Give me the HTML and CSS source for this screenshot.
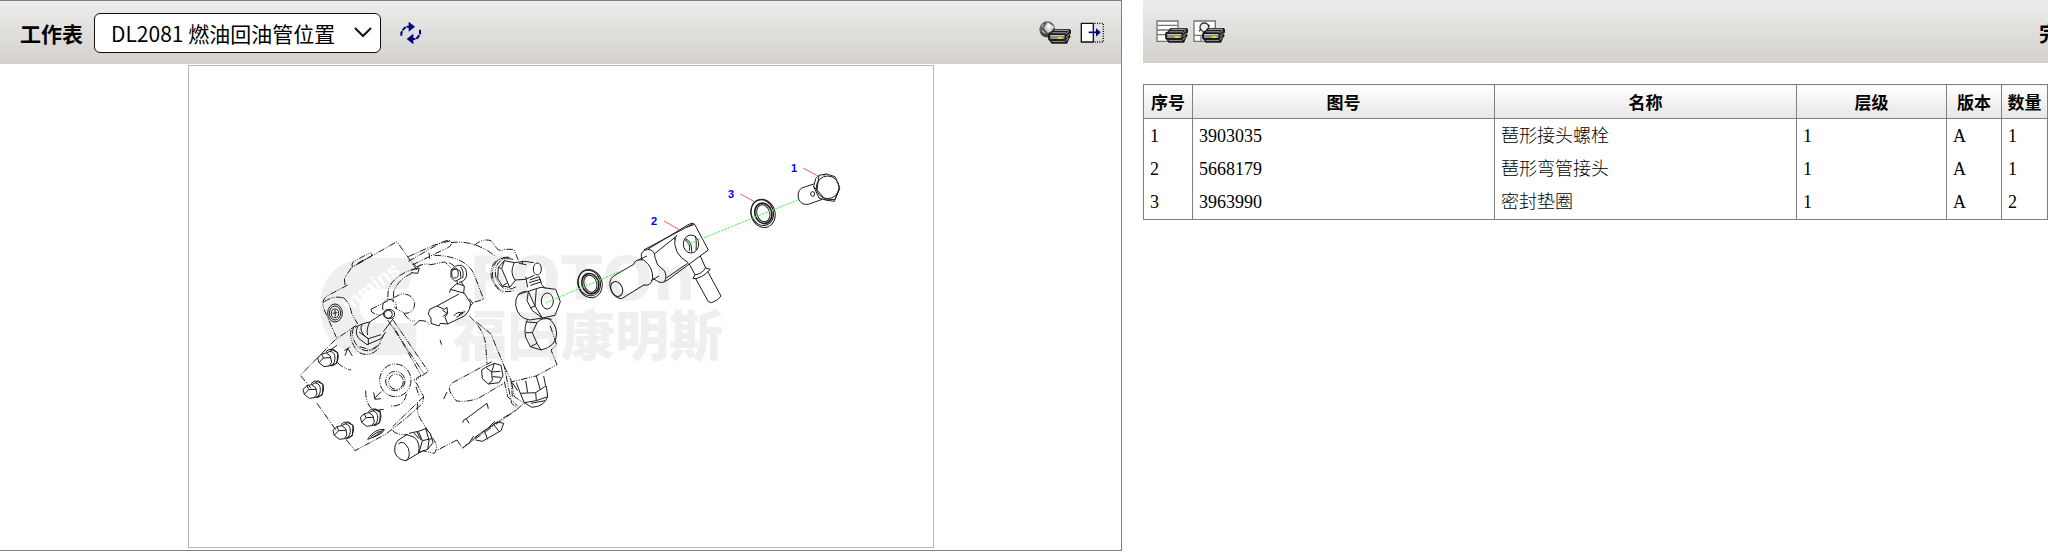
FILE: index.html
```html
<!DOCTYPE html>
<html lang="zh-CN">
<head>
<meta charset="utf-8">
<title>工作表</title>
<link rel="stylesheet" href="styles.css">
</head>
<body>
<svg class="defs" aria-hidden="true">
  <defs>
    <symbol id="printer" viewBox="0 0 70 48">
      <path d="M4 15H8L18 3H66L70 8V14L66 20L68 26L63 34L58 46H12L8 40L2 34V22Z" fill="#1c1c1c"/>
      <path d="M20 7H62M14 14H54" stroke="#9a9a9a" stroke-width="3"/>
      <path d="M8 22H50V32H8Z" fill="#8f8f8f"/>
      <path d="M8 22H50" stroke="#c2c2c2" stroke-width="3"/>
      <path d="M13 40H52" stroke="#8a8a8a" stroke-width="3"/>
      <path d="M54 18L63 10M54 28L65 18M54 38L62 28" stroke="#8a8a8a" stroke-width="3"/>
      <path d="M30 30H44" stroke="#eee600" stroke-width="5"/>
    </symbol>
  </defs>
</svg>
<main class="viewer">
  <section class="sheet">
    <header class="toolbar">
      <label class="toolbar-label" for="sheet-select">工作表</label>
      <span class="select-box">
        <select id="sheet-select" class="sheet-select"><option>DL2081 燃油回油管位置</option></select>
        <svg class="chevron" viewBox="0 0 18 12" aria-hidden="true"><path d="M1 1L9 9L17 1" fill="none" stroke="#111" stroke-width="2"/></svg>
      </span>
      <button class="icon-button refresh" aria-label="刷新">
        <svg width="22" height="24" viewBox="0 0 66 72"><g fill="none" stroke="#00007f" stroke-width="6"><path d="M4 44V35L10 25L18 17H27" stroke-dasharray="14 3"/><path d="M60 26V39L54 48L48 54H38" stroke-dasharray="14 3"/></g><path d="M26 2L45 17L26 32ZM40 38L20 54L40 70Z" fill="#00007f"/></svg>
      </button>
      <div class="toolbar-actions">
        <button class="icon-button" aria-label="打印图形">
          <svg width="32" height="24" viewBox="0 0 96 72"><circle cx="25" cy="25" r="24" fill="#626262"/><path d="M2 32A24 24 0 0 0 48 32Q25 46 2 32Z" fill="#2c2c2c" opacity=".6"/><path d="M26 3L46 17L39 29L27 35L15 21Z" fill="#d4d4d4"/><path d="M29 7L37 16L31 24L23 16Z" fill="#fff"/><path d="M8 18L13 10M9 29L18 37" stroke="#aaa" stroke-width="4"/><use href="#printer" x="25" y="21" width="72" height="49"/></svg>
        </button>
        <button class="icon-button" aria-label="隐藏列表">
          <svg width="24" height="22" viewBox="0 0 72 66"><path d="M4 4H40V60H4Z" fill="#fff" stroke="#111" stroke-width="4"/><path d="M44 4H70V60H44" fill="none" stroke="#111" stroke-width="4" stroke-dasharray="3 4"/><path d="M26 31H52" stroke="#00007f" stroke-width="5"/><path d="M48 19L62 31L48 44Z" fill="#00007f"/></svg>
        </button>
      </div>
    </header>
    <div class="canvas-wrap">
      <svg class="drawing" viewBox="188 66 744 481" role="img" aria-label="燃油回油管位置">
        <g class="watermark">
          <g transform="translate(290 230) scale(.33333)">
            <path d="M382 84H232Q90 94 88 230Q90 365 232 376H376V280H255Q206 275 206 230Q206 178 255 176H350Z"/>
            <text class="wm-mark" transform="translate(172 248) rotate(-37)">mmins</text>
            <circle cx="392" cy="366" r="7" fill="none" stroke="#eee" stroke-width="2"/>
          </g>
          <text class="wm-latin" x="468" y="300">FOTOn</text>
          <text class="wm-cjk" x="452" y="356">福田康明斯</text>
        </g>
        <g class="pump" transform="translate(290 230) scale(.33333)">
          <g class="dash">
            <path d="M162 165L160 145L182 112L318 35L378 120M184 112Q178 96 200 88L238 68Q248 74 236 82L190 108M200 100L235 80"/>
            <path d="M170 165L110 197Q88 210 100 240L136 322M156 202Q175 215 182 250L200 282M100 215Q130 195 156 204"/>
            <path d="M196 286L134 328L28 436L60 475M78 520L136 602M165 628L192 662L285 612L345 565L395 520L398 500L378 462L368 450L390 436L308 290"/>
            <path d="M290 270L398 430M306 270L412 424L375 450M375 470L385 498M380 520Q375 545 390 570L425 625Q445 650 430 670L395 662"/>
            <path d="M352 94L450 38Q480 24 482 40Q480 52 455 60L362 106M352 80L430 45L480 32M414 68L416 86"/>
            <path d="M480 38Q550 28 615 80M550 46Q575 24 600 32L618 56Q630 66 640 58L668 58L682 90M430 76Q520 78 548 130L578 208L545 218"/>
            <path d="M378 115Q310 132 292 178L290 208M362 130Q320 150 308 185L306 220M378 112Q395 98 420 104L460 96Q475 104 482 120"/>
            <path d="M240 238L330 192Q365 190 371 220Q370 250 340 250L310 232M240 238Q238 252 270 256M276 240Q270 215 292 208Q318 208 316 235M340 252Q360 280 372 272M385 272Q410 270 415 285"/>
            <path d="M535 258Q580 300 584 345L588 400M556 276L600 312L640 410L662 520L676 532"/>
            <path d="M640 410L660 450L664 500M640 455L650 500L680 528M602 395L485 458Q468 470 480 490L495 512Q520 518 560 506L635 462"/>
            <path d="M498 630L514 654L676 540L698 520M498 630L440 660M515 655Q575 600 676 540M305 600Q310 615 350 614M346 492Q340 530 300 528M398 500L305 590"/>
            <path d="M778 288L797 345L780 360L798 404L735 438L660 456M662 458L670 500L700 520"/>
            <ellipse cx="313" cy="451" rx="47" ry="49"/><ellipse cx="313" cy="453" rx="29" ry="29"/><ellipse cx="315" cy="455" rx="22" ry="23"/>
            <path d="M140 398Q155 415 180 420M224 482Q224 520 242 536L270 544M138 345Q130 355 112 360"/>
          </g>
          <g class="solid">
            <ellipse cx="132" cy="249" rx="22" ry="27"/><ellipse cx="132" cy="249" rx="17" ry="21"/><ellipse cx="132" cy="250" rx="11" ry="13"/><path d="M125 250L139 248M132 240L133 259"/>
            <path d="M162 377L170 355L184 378M160 362L176 352M248 487L252 508L270 506M250 506L270 485M370 286L386 270M447 330L452 344M458 507L468 486M262 540L278 538"/>
            <path d="M515 578Q518 566 526 566L588 520L592 536M526 566L534 580"/>
            <g id="bolt"><path d="M92 372L106 369L118 378L122 397L114 408L99 410L84 398L80 383ZM92 372L97 384L84 398M97 384L120 383M106 369L124 360L140 368L138 400L114 408"/><path d="M104 366Q110 356 126 358Q146 366 141 387Q136 407 120 408M118 364Q133 367 132 386Q132 398 124 405"/></g>
            <use href="#bolt" x="-44" y="95"/><use href="#bolt" x="46" y="218"/><use href="#bolt" x="128" y="179"/>
            <ellipse cx="294" cy="252" rx="17" ry="14"/><ellipse cx="292" cy="253" rx="12" ry="12"/>
            <path d="M276 250L236 276Q225 300 230 315M308 264L277 305M200 290Q190 310 204 326L228 344L270 326L284 306M192 292L214 282L235 276M204 306L232 326L270 314M232 326V344M214 282Q200 302 230 326"/>
            <path class="dash" d="M188 292Q176 322 204 354Q238 374 262 346L278 315M180 300Q174 335 202 366Q235 386 266 352M206 350L240 360L270 340"/>
            <path d="M416 238L438 228L460 238L468 232L470 250L462 262L470 282L448 280L444 288L420 280V264L412 252ZM438 228L504 192M470 282L520 258Q540 240 538 218L520 190L478 178L476 188M478 178L498 160L520 168L518 190M454 240L468 250L455 260M488 258Q500 242 516 250L496 262M504 255Q510 247 522 245M535 206L545 220L536 230"/>
            <ellipse cx="492" cy="131" rx="10" ry="13"/><path d="M480 122L494 114L508 124L510 145L492 154L480 142ZM482 120Q490 104 512 106Q530 115 526 140Q520 155 505 157M508 110Q520 122 515 145M475 98L490 108M360 120L385 114L380 130L360 128M367 100L378 112L388 104M498 152L500 164M510 154L518 168"/>
            <ellipse cx="739" cy="117" rx="12" ry="18"/>
            <path d="M728 98L700 94L670 98Q655 128 672 150L704 148L730 136M670 98L640 92L622 112L620 145L634 168L656 172L674 150M640 92L632 116L650 158L656 172M632 116L622 112M650 158L634 168M694 94V102M684 100L706 104"/>
            <path class="dash" d="M656 82Q620 78 608 110Q596 148 624 176Q644 192 672 180M666 88Q624 78 614 116Q608 148 634 172Q652 184 676 170M650 84Q602 82 600 130Q602 170 640 190"/>
            <path d="M704 140L710 172M716 150L745 140L752 164M714 158L748 148M718 166L750 156M752 164L764 176"/>
            <ellipse cx="769" cy="213" rx="18" ry="24"/>
            <path d="M736 176L750 172L794 178L808 215L792 256L754 264L732 228ZM736 176L712 184L708 212L724 242L754 264M732 228L718 234M712 184L732 228M708 184Q672 184 674 226Q680 264 716 270L754 264M680 194L710 184"/>
            <path d="M710 268Q698 290 704 322L718 350L750 360Q795 350 797 312Q796 280 770 264M704 276L738 278L724 308L738 340L750 360M724 308H704M738 278Q752 260 782 268M738 340L718 350"/>
            <path d="M572 420L584 412L602 426L604 452L592 462L574 446ZM584 412L610 400L630 406L636 438M592 462L624 458L636 438M602 426L628 424M604 440L630 442M610 400L602 426"/>
            <path d="M676 458L688 490L734 488L764 468L758 438M688 490L700 518L736 512L770 500L766 468M734 488L736 512M704 452L710 488M736 438L748 480M700 518L722 532Q760 530 770 500M720 520L762 512M664 458L680 482"/>
            <path d="M348 614L322 630Q308 645 312 668Q320 690 345 692L392 664M322 642Q338 628 352 655Q360 682 345 692M348 614L370 622Q390 640 382 670M354 610L382 604L404 596L418 610L426 638L410 658L382 668M382 604L394 632L384 668M394 632L422 626M404 596L414 630L410 658M368 608L384 626M378 606L390 630"/>
            <path d="M552 622L580 602L620 576L638 580L630 602L574 634L554 630M580 602L590 628M608 584L624 604M592 594Q600 584 612 574M534 640L548 618M230 628Q250 596 280 598Q278 612 230 628ZM240 620Q258 604 276 602M246 622L270 606"/>
          </g>
        </g>
        <g class="part" transform="translate(560 150) scale(.33333)">
          <path d="M241 320Q238 304 260 298L380 225Q396 216 401 223L442 300L320 390Q300 404 287 392L275 385M260 298Q282 300 282 322L290 345L310 362Q320 382 310 394M248 300L395 222M280 312L342 262M241 320L243 330M316 384L380 340M342 260Q334 312 382 338M348 255Q342 262 342 270M401 223L376 232"/>
          <ellipse cx="390" cy="282" rx="23" ry="27"/><path d="M373 266Q394 274 392 306M370 268Q390 280 385 302M402 258Q408 270 405 300"/>
          <path d="M218 343Q222 326 248 330Q276 350 275 385Q270 410 248 405M218 343L158 378Q142 390 148 414Q160 446 182 446L250 404M232 330L258 318M270 392L294 378"/><ellipse cx="167" cy="417" rx="17" ry="23" transform="rotate(-24 167 417)"/>
          <path d="M384 340L402 374L396 386Q420 388 448 358L434 354L418 318M404 386L442 455L452 458Q474 450 480 438L440 364M402 374Q420 374 434 354"/>
          <g id="washer"><ellipse cx="606" cy="190" rx="36" ry="43" transform="rotate(-18 606 190)"/><ellipse cx="604" cy="188" rx="33" ry="39" transform="rotate(-18 604 188)"/><ellipse cx="607" cy="190" rx="25" ry="31" transform="rotate(-18 607 190)" stroke-width="5"/><ellipse cx="607" cy="190" rx="19" ry="26" transform="rotate(-18 607 190)"/></g>
          <use href="#washer" x="-519" y="211"/>
          <path d="M774 76L796 72L822 80L836 112L822 148L794 150L768 120ZM774 76L764 86L758 110L774 144L794 150L820 154L836 116M758 110L768 120M758 102L722 114Q706 126 714 150Q724 166 742 163L784 148M796 72L788 76"/><circle cx="800" cy="112" r="34"/><ellipse cx="755" cy="132" rx="6" ry="7"/>
          <path class="axis" d="M712 149L375 285M182 362L-45 458"/>
          <path class="leader" d="M726 54L770 78M538 132L580 155M309 213L353 238"/>
        </g>
        <g class="callout"><text x="790" y="172">1</text><text x="727" y="198">3</text><text x="650" y="225">2</text></g>
      </svg>
    </div>
  </section>
  <section class="parts">
    <header class="toolbar parts-toolbar">
      <button class="icon-button" aria-label="打印列表">
        <svg width="32" height="24" viewBox="0 0 96 72"><path d="M3 3H66V64H3Z" fill="#fff" stroke="#747470" stroke-width="4"/><path d="M4 16H64M4 30H64M4 44H64" stroke="#747470" stroke-width="4"/><use href="#printer" x="25" y="21" width="72" height="49"/></svg>
      </button>
      <button class="icon-button" aria-label="打印图形和列表">
        <svg width="32" height="24" viewBox="0 0 96 72"><path d="M3 3H67V64H3Z" fill="#fff" stroke="#747470" stroke-width="4"/><path d="M4 46H64M24 48V64" stroke="#747470" stroke-width="4"/><circle cx="34" cy="22" r="13" fill="#eee" stroke="#333" stroke-width="4"/><path d="M18 34L25 27M46 14L50 18" stroke="#333" stroke-width="4"/><use href="#printer" x="25" y="21" width="72" height="49"/></svg>
      </button>
      <h1 class="parts-title">完</h1>
    </header>
    <table class="parts-table">
      <colgroup><col class="c-no"><col class="c-wide"><col class="c-wide"><col><col class="c-rev"><col class="c-qty"></colgroup>
      <thead><tr><th>序号</th><th>图号</th><th>名称</th><th>层级</th><th>版本</th><th>数量</th></tr></thead>
      <tbody>
        <tr><td>1</td><td>3903035</td><td>琶形接头螺栓</td><td>1</td><td>A</td><td>1</td></tr>
        <tr><td>2</td><td>5668179</td><td>琶形弯管接头</td><td>1</td><td>A</td><td>1</td></tr>
        <tr><td>3</td><td>3963990</td><td>密封垫圈</td><td>1</td><td>A</td><td>2</td></tr>
      </tbody>
    </table>
  </section>
</main>
</body>
</html>
```
FILE: styles.css
```css
* { box-sizing: border-box; }
body { margin: 0; background: #fff; color: #000; font-family: "Noto Sans CJK SC", sans-serif; overflow-x: hidden; }
.defs { position: absolute; width: 0; height: 0; }
.viewer { display: grid; grid-template-columns: 1122fr 905fr; column-gap: 21px; align-items: start; }
.sheet { border: 1px solid #808080; border-left: 0; }
.toolbar { display: flex; align-items: center; height: 63px; padding: 0 17px 0 20px; background: linear-gradient(#ececeb, #dddcd9 60%, #d5d0cc); }
.toolbar-label { font-size: 21px; font-weight: 700; }
.select-box { display: grid; align-items: center; margin-left: 11px; }
.sheet-select { grid-area: 1 / 1; appearance: none; width: 287px; height: 40px; padding: 0 16px; border: 1px solid #111; border-radius: 6px; background: #fff; color: #000; font: 400 21px "Noto Sans CJK SC", sans-serif; }
.chevron { grid-area: 1 / 1; justify-self: end; width: 18px; height: 12px; margin-right: 9px; pointer-events: none; }
.icon-button { display: block; flex: none; padding: 0; border: 0; background: none; line-height: 0; }
.refresh { margin-left: 19px; }
.toolbar-actions { display: flex; align-items: center; gap: 9px; margin-left: auto; }
.canvas-wrap { padding: 1px 0 2px; }
.drawing { display: block; width: 100%; max-width: 746px; margin: 0 auto; border: 1px solid #b8b8b8; }
.watermark { fill: #efefef; }
.wm-mark { fill: #fff; font: 700 62px "Liberation Sans", sans-serif; }
.wm-latin { font: 700 60px "DejaVu Sans", sans-serif; }
.wm-cjk { font: 900 54px "Noto Sans CJK SC", sans-serif; }
.pump, .part { fill: none; stroke: #1c1c1c; stroke-width: 3; }
.dash { stroke-dasharray: 20 4 3 4 3 4; }
.axis { stroke: #4df34d; stroke-dasharray: 8 3; }
.leader { stroke: #ff5a5a; }
.callout { fill: #00f; font: 700 11px "Liberation Sans", sans-serif; }
.parts { min-width: 0; }
.parts-toolbar { gap: 5px; padding: 0 0 0 13px; overflow: hidden; }
.parts-title { margin: 0 -12px 0 auto; font-size: 21px; font-weight: 700; }
.parts-table { width: 100%; margin-top: 21px; border-collapse: collapse; table-layout: fixed; border: 1px solid #808080; }
.c-no { width: 49px; }
.c-wide { width: 302px; }
.c-rev { width: 55px; }
.c-qty { width: 46px; }
.parts-table th { height: 34px; padding: 0; border: 1px solid #808080; background: linear-gradient(#fff, #e6e6e6); font-size: 17px; line-height: 24px; white-space: nowrap; }
.parts-table td { height: 33px; padding: 2px 6px 0; border: 0 solid #808080; border-width: 0 1px; font: 300 18px/24px "Liberation Serif", "Noto Sans CJK SC", serif; }
.parts-table tbody tr:last-child td { height: 35px; padding-bottom: 2px; }
```
